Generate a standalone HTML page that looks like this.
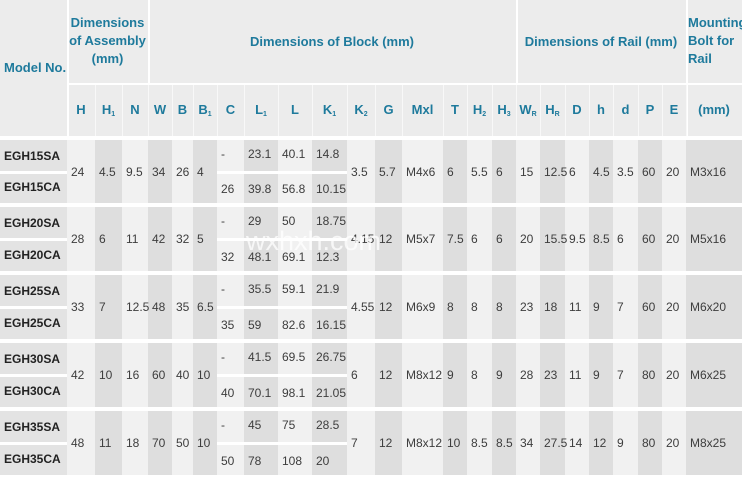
<!DOCTYPE html>
<html><head><meta charset="utf-8"><style>
*{margin:0;padding:0;box-sizing:border-box}
body{width:742px;height:478px;background:#fff;position:relative;overflow:hidden;font-family:"Liberation Sans Narrow","Liberation Sans",sans-serif}
.a{position:absolute}
.h{color:#1e7a9c;font-weight:bold;font-size:13px;text-align:center;line-height:18px}
.s{color:#1e7a9c;font-weight:bold;font-size:13px;text-align:center;line-height:50px}
sub{font-size:7px;vertical-align:-2px}
.d{color:#3d3d3d;font-size:12px;padding-left:4px;white-space:nowrap}
.m{color:#222;font-weight:bold;font-size:12px;padding-left:4px}
</style></head><body>
<!-- header backgrounds -->
<div class="a" style="left:0;top:0;width:742px;height:136px;background:#ececec"></div>
<div class="a" style="left:67px;top:83px;width:675px;height:2px;background:#fff"></div>
<div class="a" style="left:0;top:136px;width:742px;height:4px;background:#fff"></div>
<div class="a" style="left:67px;top:0;width:2px;height:136px;background:#fff"></div>
<div class="a" style="left:148px;top:0;width:2px;height:83px;background:#fff"></div>
<div class="a" style="left:516px;top:0;width:2px;height:83px;background:#fff"></div>
<div class="a" style="left:686px;top:0;width:2px;height:136px;background:#fff"></div>
<div id="sub"></div>
<div class="a h" style="left:0;top:59px;width:67px;text-align:left;padding-left:4px">Model No.</div>
<div class="a h" style="left:67px;top:14px;width:81px">Dimensions<br>of Assembly<br>(mm)</div>
<div class="a h" style="left:148px;top:33px;width:368px">Dimensions of Block (mm)</div>
<div class="a h" style="left:516px;top:33px;width:170px">Dimensions of Rail (mm)</div>
<div class="a h" style="left:688px;top:14px;width:54px;text-align:left">Mounting<br>Bolt for<br>Rail</div>
<div id="body"></div>
<script>
var c=[0,67,95,122,148,172,193,217,244,278,312,347,375,402,443,467,492,516,540,565,589,613,638,662,686,742];
var labels=["","H","H<sub>1</sub>","N","W","B","B<sub>1</sub>","C","L<sub>1</sub>","L","K<sub>1</sub>","K<sub>2</sub>","G","Mxl","T","H<sub>2</sub>","H<sub>3</sub>","W<sub>R</sub>","H<sub>R</sub>","D","h","d","P","E","(mm)"];
var h="";
for(var i=1;i<25;i++){
 h+='<div class="a s" style="left:'+c[i]+'px;top:85px;width:'+(c[i+1]-c[i])+'px;height:50px">'+labels[i]+'</div>';
 if(i>1)h+='<div class="a" style="left:'+c[i]+'px;top:85px;width:1px;height:51px;background:#f8f8f8"></div>';
}
document.getElementById("sub").outerHTML=h;
var g=[[140,203],[207,271],[275,339],[343,407],[411,475]];
var D=[
["EGH15SA","EGH15CA",["24","4.5","9.5","34","26","4"],["-","23.1","40.1","14.8"],["26","39.8","56.8","10.15"],["3.5","5.7","M4x6","6","5.5","6","15","12.5","6","4.5","3.5","60","20","M3x16"]],
["EGH20SA","EGH20CA",["28","6","11","42","32","5"],["-","29","50","18.75"],["32","48.1","69.1","12.3"],["4.15","12","M5x7","7.5","6","6","20","15.5","9.5","8.5","6","60","20","M5x16"]],
["EGH25SA","EGH25CA",["33","7","12.5","48","35","6.5"],["-","35.5","59.1","21.9"],["35","59","82.6","16.15"],["4.55","12","M6x9","8","8","8","23","18","11","9","7","60","20","M6x20"]],
["EGH30SA","EGH30CA",["42","10","16","60","40","10"],["-","41.5","69.5","26.75"],["40","70.1","98.1","21.05"],["6","12","M8x12","9","8","9","28","23","11","9","7","80","20","M6x25"]],
["EGH35SA","EGH35CA",["48","11","18","70","50","10"],["-","45","75","28.5"],["50","78","108","20"],["7","12","M8x12","10","8.5","8.5","34","27.5","14","12","9","80","20","M8x25"]]];
h="";
for(var r=0;r<5;r++){
 var y0=g[r][0],y1=g[r][1],hh=y1-y0,mid=y0+hh/2;
 for(var i=0;i<25;i++){
  var col=i==0?"#e3e3e3":(i%2?"#f1f1f1":"#dedede");
  h+='<div class="a" style="left:'+c[i]+'px;top:'+y0+'px;width:'+(c[i+1]-c[i])+'px;height:'+hh+'px;background:'+col+'"></div>';
 }
 h+='<div class="a" style="left:0;top:'+(mid-1)+'px;width:67px;height:3px;background:#fff"></div>';
 h+='<div class="a" style="left:217px;top:'+(mid-1)+'px;width:130px;height:3px;background:#fff"></div>';
 var d=D[r];
 h+='<div class="a m" style="left:0;top:'+(y0+6)+'px;line-height:20px">'+d[0]+'</div>';
 h+='<div class="a m" style="left:0;top:'+(y1-26)+'px;line-height:20px">'+d[1]+'</div>';
 for(var k=0;k<6;k++)h+='<div class="a d" style="left:'+c[1+k]+'px;top:'+(mid-10)+'px;line-height:20px">'+d[2][k]+'</div>';
 for(var k=0;k<4;k++){
  h+='<div class="a d" style="left:'+c[7+k]+'px;top:'+(y0+4)+'px;line-height:20px">'+d[3][k]+'</div>';
  h+='<div class="a d" style="left:'+c[7+k]+'px;top:'+(y1-24)+'px;line-height:20px">'+d[4][k]+'</div>';
 }
 for(var k=0;k<14;k++)h+='<div class="a d" style="left:'+c[11+k]+'px;top:'+(mid-10)+'px;line-height:20px">'+d[5][k]+'</div>';
}
h+='<div class="a" style="left:246px;top:226px;font-size:27px;color:rgba(255,255,255,0.75);font-family:\'Liberation Sans\',sans-serif">wxhxh.com</div>';
document.getElementById("body").outerHTML=h;
</script>
</body></html>
